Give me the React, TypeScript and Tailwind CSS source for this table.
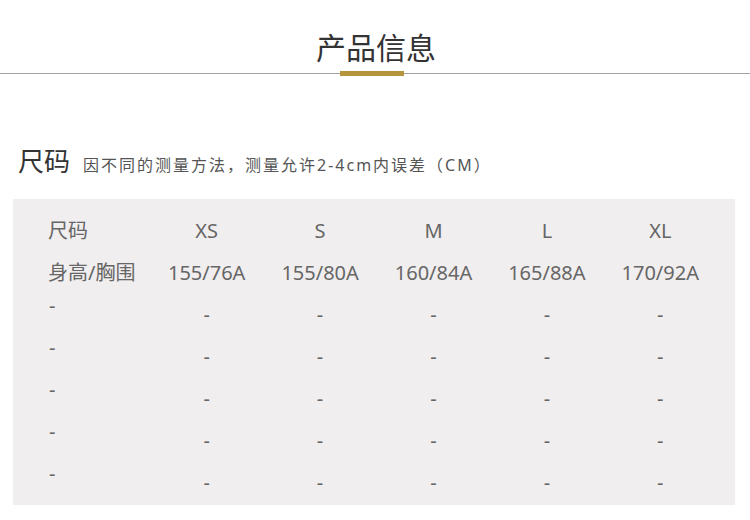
import React from "react";

const FONT = { fontFamily: '"Noto Sans", "Noto Sans CJK SC", sans-serif' };

const sizes = ["XS", "S", "M", "L", "XL"];
const specs = ["155/76A", "155/80A", "160/84A", "165/88A", "170/92A"];

export default function App() {
  return (
    <div className="w-[750px] h-[520px] bg-white overflow-hidden" style={FONT}>
      <div className="pt-[33px] flex justify-center">
        <div className="text-[30px] leading-[30px] text-[#333] pl-[2px]">产品信息</div>
      </div>
      <div className="mt-[8px] flex items-center h-[5px]">
        <div className="w-[340px] h-px bg-[#a3a3a3]" />
        <div className="w-[64px] h-[5px] bg-[#b4953c]" />
        <div className="flex-1 h-px bg-[#a3a3a3]" />
      </div>

      <div className="mt-[70px] pl-[18px] flex items-baseline">
        <span className="text-[26px] leading-[30px] text-[#333]">尺码</span>
        <span className="ml-[13px] text-[16px] tracking-[2px] text-[#555]">
          因不同的测量方法，测量允许2-4cm内误差（CM）
        </span>
      </div>

      <div className="mt-[22px] ml-[13px] w-[722px] h-[306px] bg-[#f1eeef] pl-[35px] pt-[11px] text-[#666] text-[20px]">
        <div className="grid grid-cols-[102px_repeat(5,113.4px)] auto-rows-[42px]">
          <div className="flex items-center">尺码</div>
          {sizes.map((s) => (
            <div key={s} className="flex items-center justify-center">
              {s}
            </div>
          ))}
          <div className="flex items-center whitespace-nowrap">身高/胸围</div>
          {specs.map((s) => (
            <div key={s} className="flex items-center justify-center">
              {s}
            </div>
          ))}
          {[0, 1, 2, 3, 4].map((r) => (
            <React.Fragment key={r}>
              <div className="flex items-center pb-[18px] pl-[1px]">-</div>
              {sizes.map((s) => (
                <div key={s} className="flex items-center justify-center">
                  -
                </div>
              ))}
            </React.Fragment>
          ))}
        </div>
      </div>
    </div>
  );
}
